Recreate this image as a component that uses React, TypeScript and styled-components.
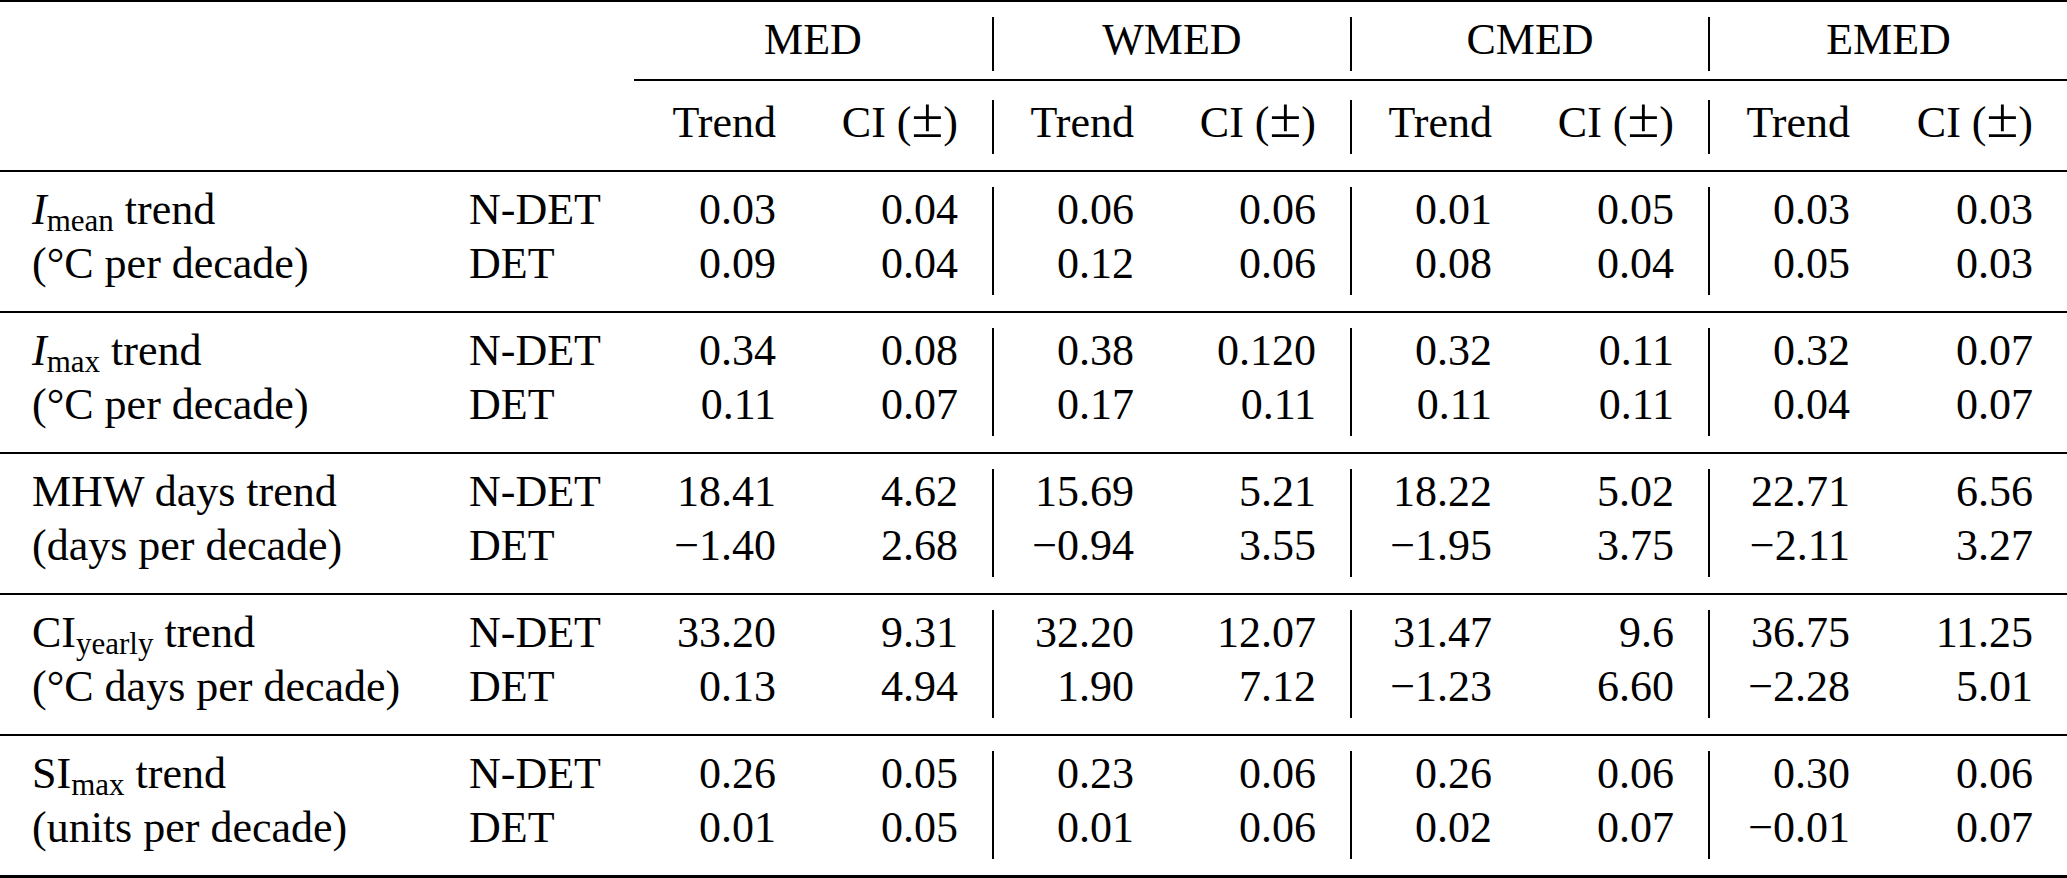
import React from "react";
import styled, { createGlobalStyle, css } from "styled-components";

const GlobalStyle = createGlobalStyle`
  html, body {
    margin: 0;
    padding: 0;
    background: #fff;
  }
  body {
    font-family: "Liberation Serif", "Times New Roman", serif;
    color: #000;
  }
`;

type Pair = [string, string];

interface Block {
  label: React.ReactNode;
  unit: string;
  ndet: Pair[];
  det: Pair[];
}

const regions = ["MED", "WMED", "CMED", "EMED"];

const Var = styled.span`
  font-style: italic;
`;

const Sub = styled.span`
  font-size: 31px;
  line-height: 0;
  vertical-align: -7px;
`;

// the math ± is wider than the text one
const PlusMinus = styled.span`
  font-size: 58px;
  line-height: 0;
`;

const blocks: Block[] = [
  {
    label: (
      <>
        <Var>I</Var>
        <Sub>mean</Sub> trend
      </>
    ),
    unit: "(°C per decade)",
    ndet: [["0.03", "0.04"], ["0.06", "0.06"], ["0.01", "0.05"], ["0.03", "0.03"]],
    det: [["0.09", "0.04"], ["0.12", "0.06"], ["0.08", "0.04"], ["0.05", "0.03"]],
  },
  {
    label: (
      <>
        <Var>I</Var>
        <Sub>max</Sub> trend
      </>
    ),
    unit: "(°C per decade)",
    ndet: [["0.34", "0.08"], ["0.38", "0.120"], ["0.32", "0.11"], ["0.32", "0.07"]],
    det: [["0.11", "0.07"], ["0.17", "0.11"], ["0.11", "0.11"], ["0.04", "0.07"]],
  },
  {
    label: <>MHW days trend</>,
    unit: "(days per decade)",
    ndet: [["18.41", "4.62"], ["15.69", "5.21"], ["18.22", "5.02"], ["22.71", "6.56"]],
    det: [["−1.40", "2.68"], ["−0.94", "3.55"], ["−1.95", "3.75"], ["−2.11", "3.27"]],
  },
  {
    label: (
      <>
        CI<Sub>yearly</Sub> trend
      </>
    ),
    unit: "(°C days per decade)",
    ndet: [["33.20", "9.31"], ["32.20", "12.07"], ["31.47", "9.6"], ["36.75", "11.25"]],
    det: [["0.13", "4.94"], ["1.90", "7.12"], ["−1.23", "6.60"], ["−2.28", "5.01"]],
  },
  {
    label: (
      <>
        SI<Sub>max</Sub> trend
      </>
    ),
    unit: "(units per decade)",
    ndet: [["0.26", "0.05"], ["0.23", "0.06"], ["0.26", "0.06"], ["0.30", "0.06"]],
    det: [["0.01", "0.05"], ["0.01", "0.06"], ["0.02", "0.07"], ["−0.01", "0.07"]],
  },
];

const App = () => {
  return (
    <>
      <GlobalStyle />
      <Table>
        <GroupRow>
          <span />
          <span />
          {regions.map((r, i) => (
            <GroupHead key={r} $divided={i > 0}>
              <Stack>{r}</Stack>
            </GroupHead>
          ))}
        </GroupRow>
        <CmidRule />
        <SubRow>
          <span />
          <span />
          {regions.map((r, i) => (
            <React.Fragment key={r}>
              <NumCell $divided={i > 0}>
                <Stack>Trend</Stack>
              </NumCell>
              <NumCell $ci>
                <Stack>
                  CI (<PlusMinus>±</PlusMinus>)
                </Stack>
              </NumCell>
            </React.Fragment>
          ))}
        </SubRow>
        {blocks.map((b, k) => (
          <Section key={k}>
            <LabelCell>
              <Stack>
                <Line>{b.label}</Line>
                <Line>{b.unit}</Line>
              </Stack>
            </LabelCell>
            <MethodCell>
              <Stack>
                <Line>N-DET</Line>
                <Line>DET</Line>
              </Stack>
            </MethodCell>
            {regions.map((r, i) => (
              <React.Fragment key={r}>
                <NumCell $divided={i > 0}>
                  <Stack>
                    <Line>{b.ndet[i][0]}</Line>
                    <Line>{b.det[i][0]}</Line>
                  </Stack>
                </NumCell>
                <NumCell $ci>
                  <Stack>
                    <Line>{b.ndet[i][1]}</Line>
                    <Line>{b.det[i][1]}</Line>
                  </Stack>
                </NumCell>
              </React.Fragment>
            ))}
          </Section>
        ))}
      </Table>
    </>
  );
};

export default App;

const columns = css`
  display: grid;
  grid-template-columns: 469px 165px repeat(3, 175px 183px) 175px 1fr;
`;

const Table = styled.div`
  width: 2067px;
  border-top: 2px solid #000;
  border-bottom: 3px solid #000;
  font-family: "Liberation Serif", "Times New Roman", serif;
  font-size: 44px;
  line-height: 54px;
  color: #000;
`;

const GroupRow = styled.div`
  ${columns};
  padding: 15px 0 8px;
`;

const CmidRule = styled.div`
  margin-left: 634px;
  height: 2px;
  background: #000;
`;

const SubRow = styled.div`
  ${columns};
  padding: 19px 0 16px;
`;

const Section = styled.div`
  ${columns};
  border-top: 2px solid #000;
  padding: 15px 0 16px;
`;

const Stack = styled.div`
  margin: -4px 0 4px;
  white-space: nowrap;
`;

const Line = styled.div`
  height: 54px;
`;

const GroupHead = styled.div<{ $divided?: boolean }>`
  grid-column: span 2;
  text-align: center;
  border-left: ${(p) => (p.$divided ? "2px solid #000" : "none")};
`;

const LabelCell = styled.div`
  padding-left: 32px;
`;

const MethodCell = styled.div`
  text-align: left;
`;

const NumCell = styled.div<{ $divided?: boolean; $ci?: boolean }>`
  text-align: right;
  padding-right: ${(p) => (p.$ci ? "34px" : "33px")};
  border-left: ${(p) => (p.$divided ? "2px solid #000" : "none")};
`;
